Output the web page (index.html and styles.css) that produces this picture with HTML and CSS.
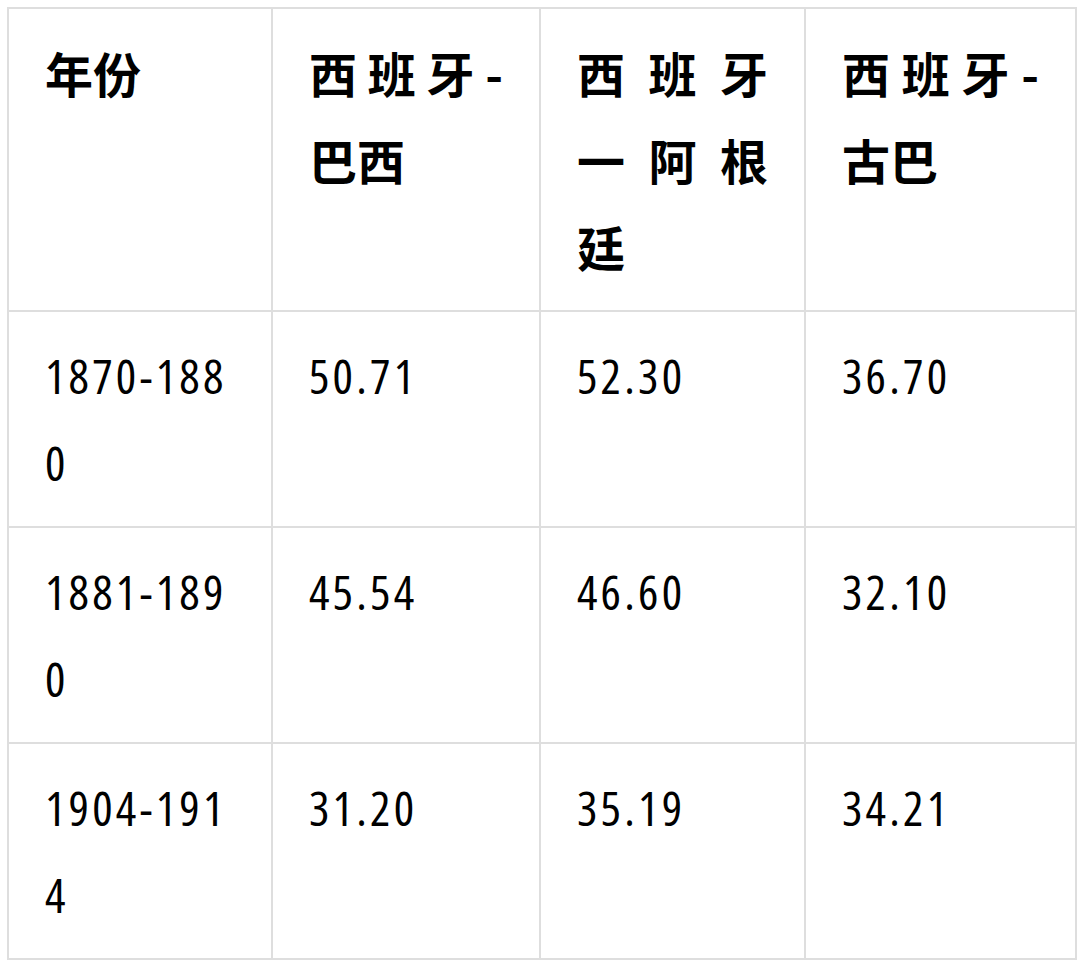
FILE: index.html
```html
<!DOCTYPE html>
<html lang="zh-CN">
<head>
<meta charset="utf-8">
<title>表格</title>
<link rel="stylesheet" href="styles.css">
</head>
<body>
<table class="data">
  <colgroup>
    <col class="c1"><col class="c2"><col class="c3"><col class="c4">
  </colgroup>
  <thead>
    <tr>
      <th>年份</th>
      <th>西班牙-巴西</th>
      <th>西班牙一阿根廷</th>
      <th>西班牙-古巴</th>
    </tr>
  </thead>
  <tbody>
    <tr><td>1870-1880</td><td>50.71</td><td>52.30</td><td>36.70</td></tr>
    <tr><td>1881-1890</td><td>45.54</td><td>46.60</td><td>32.10</td></tr>
    <tr><td>1904-1914</td><td>31.20</td><td>35.19</td><td>34.21</td></tr>
  </tbody>
</table>
</body>
</html>
```
FILE: styles.css
```css
html, body {
  margin: 0;
  padding: 0;
  background: #ffffff;
}
body {
  padding: 7px;
}
.data {
  border-collapse: collapse;
  table-layout: fixed;
  width: 1068px;
  color: #000;
  font-family: "Open Sans", "Noto Sans CJK SC", sans-serif;
  font-size: 48px;
  line-height: 87px;
}
.c1 { width: 264px; }
.c2 { width: 268px; }
.c3 { width: 265px; }
.c4 { width: 271px; }
.data th,
.data td {
  border: 2px solid #dedede;
  padding: 20px 36px 20px 36px;
  text-align: justify;
  vertical-align: top;
  word-break: break-all;
}
.data th {
  font-family: "Noto Sans CJK SC", sans-serif;
  font-weight: 700;
}
.data td {
  font-weight: 500;
  font-stretch: 75%;
  letter-spacing: 3.2px;
}
```
